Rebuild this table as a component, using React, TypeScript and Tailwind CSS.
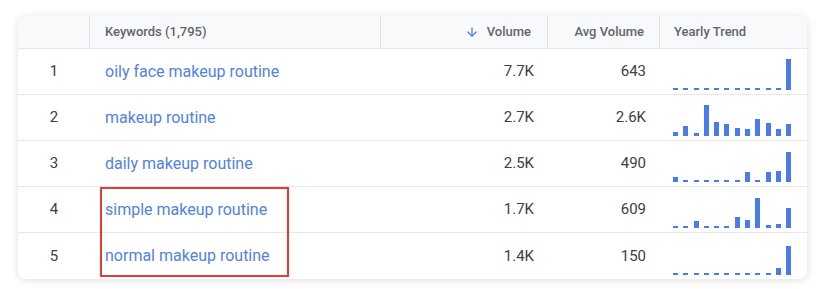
import { ArrowDown } from "lucide-react";

const rows = [
  { n: 1, kw: "oily face makeup routine", vol: "7.7K", avg: "643", trend: [2, 2, 2, 2, 2, 2, 2, 2, 2, 2, 2, 31] },
  { n: 2, kw: "makeup routine", vol: "2.7K", avg: "2.6K", trend: [4, 10, 3, 31, 14, 12, 8, 7, 17, 13, 7, 12] },
  { n: 3, kw: "daily makeup routine", vol: "2.5K", avg: "490", trend: [5, 2, 2, 2, 2, 2, 2, 10, 2, 10, 11, 30] },
  { n: 4, kw: "simple makeup routine", vol: "1.7K", avg: "609", trend: [2, 2, 7, 2, 2, 2, 11, 8, 30, 3, 4, 20] },
  { n: 5, kw: "normal makeup routine", vol: "1.4K", avg: "150", trend: [2, 2, 2, 2, 2, 2, 2, 2, 2, 2, 7, 29] },
];

const Trend = ({ data }: { data: number[] }) => {
  return (
    <div className="flex items-end gap-[5.3px] h-full pb-[4px] pl-[13px]">
      {data.map((h, i) => (
        <div key={i} className="w-[5px] bg-[#4a7be8]" style={{ height: h }} />
      ))}
    </div>
  );
};

const App = () => {
  return (
    <div className="w-[821px] h-[289px] bg-white pt-[16px] pl-[18px] font-['Roboto',sans-serif]">
      <div className="relative w-[789px] rounded-lg bg-white shadow-[0_1px_8px_rgba(0,0,0,0.13)] overflow-hidden">
        <div className="grid grid-cols-[72px_291px_167px_112px_1fr] h-[33px] bg-[#f8f9fa] text-[13px] font-medium text-[#62666b] border-b border-[#e6e8eb]">
          <div className="border-r border-[#dfe1e5]" />
          <div className="flex items-center pl-[15px] border-r border-[#dfe1e5]">Keywords (1,795)</div>
          <div className="flex items-center justify-end gap-[8px] pr-[16px] border-r border-[#dfe1e5]">
            <ArrowDown size={14} strokeWidth={2.2} className="text-[#4a7be8]" />
            <span>Volume</span>
          </div>
          <div className="flex items-center justify-end pr-[15px] border-r border-[#dfe1e5]">Avg Volume</div>
          <div className="flex items-center pl-[14px]">Yearly Trend</div>
        </div>

        {rows.map((r, i) => (
          <div
            key={r.n}
            className={`grid grid-cols-[72px_291px_167px_112px_1fr] h-[46px] text-[15px] ${i < rows.length - 1 ? "border-b border-[#e6e8eb]" : ""}`}
          >
            <div className="flex items-center justify-center text-[#3c4043]">{r.n}</div>
            <div className="flex items-center pl-[15px] text-[16px] text-[#5283e0]">{r.kw}</div>
            <div className="flex items-center justify-end pr-[14px] text-[#3c4043]">{r.vol}</div>
            <div className="flex items-center justify-end pr-[14px] text-[#3c4043]">{r.avg}</div>
            <Trend data={r.trend} />
          </div>
        ))}

        <div className="absolute left-[82px] top-[171px] w-[189px] h-[90px] border-2 border-[#e53a2f]" />
      </div>
    </div>
  );
};

export default App;
